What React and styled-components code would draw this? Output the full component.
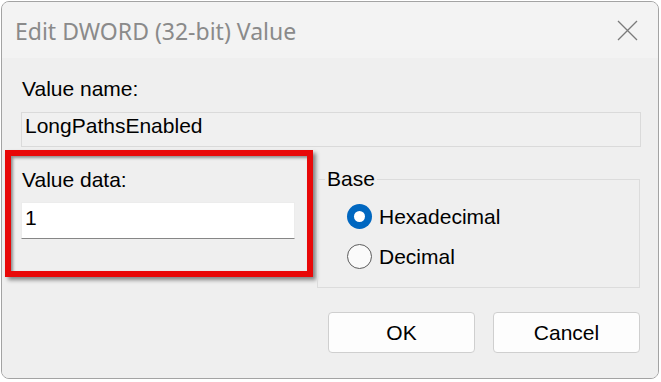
import React from 'react';
import styled, { createGlobalStyle } from 'styled-components';

const Global = createGlobalStyle`
  html, body {
    margin: 0;
    padding: 0;
    background: #ffffff;
  }
  body {
    width: 661px;
    height: 382px;
    overflow: hidden;
  }
`;

const Window = styled.div`
  margin: 1px 0 0 1px;
  width: 658px;
  height: 378px;
  box-sizing: border-box;
  border: 1px solid #a3a3a3;
  border-radius: 8px;
  overflow: hidden;
  display: flex;
  flex-direction: column;
  background: #f0f0f0;
  font-family: "Liberation Sans", Arial, sans-serif;
  font-size: 21px;
  line-height: 24px;
  color: #000;
`;

const TitleBar = styled.div`
  height: 56px;
  flex: none;
  background: #f3f3f3;
  display: flex;
  align-items: center;
  justify-content: space-between;
  padding: 0 20px 0 13px;
`;

const Title = styled.div`
  font-family: "Noto Sans", "Open Sans", sans-serif;
  font-size: 23px;
  line-height: 28px;
  color: #8a8a8a;
  margin-top: 1px;
`;

const CloseBtn = styled.div`
  width: 22px;
  height: 22px;
  display: flex;
  align-items: center;
  justify-content: center;
`;

const Body = styled.div`
  flex: 1;
  display: flex;
  flex-direction: column;
  background: #efefef;
`;

const Label = styled.div`
  padding-left: ${p => p.$indent || 0}px;
  margin-top: ${p => p.$top || 0}px;
`;

const NameField = styled.div`
  margin: 11px 17px 0 19px;
  height: 35px;
  box-sizing: border-box;
  border: 1px solid #dadada;
  background: #f0f0f0;
  padding: 1px 3px 0;
`;

const Row = styled.div`
  display: flex;
  align-items: flex-start;
  margin: 3px 0 0 3px;
`;

const Highlight = styled.div`
  width: 308px;
  height: 127px;
  box-sizing: border-box;
  border: 6px solid #e80808;
  padding: 12px 0 0 10px;
  box-shadow: 3px 3px 4px rgba(0, 0, 0, 0.45), inset 2px 2px 3px rgba(0, 0, 0, 0.4);
`;

const DataInput = styled.div`
  margin-top: 10px;
  width: 274px;
  height: 37px;
  box-sizing: border-box;
  background: #fff;
  border: 1px solid #ececec;
  border-bottom: 1px solid #868686;
  padding: 3px 3px 0;
`;

const Group = styled.fieldset`
  margin: 17px 0 0 4px;
  width: 323px;
  height: 121px;
  box-sizing: border-box;
  border: 1px solid #dcdcdc;
  padding: 13px 0 0 7px;
  min-width: 0;
`;

const Legend = styled.legend`
  padding: 0 2px;
`;

const RadioRow = styled.div`
  display: flex;
  align-items: center;
  gap: 7px;
  margin: ${p => (p.$first ? 0 : 15)}px 0 0 22px;
`;

const RadioDot = styled.span`
  width: 25px;
  height: 25px;
  box-sizing: border-box;
  border-radius: 50%;
  flex: none;
  display: flex;
  align-items: center;
  justify-content: center;
  background: ${p => (p.$checked ? '#0067c0' : '#fafafa')};
  border: ${p => (p.$checked ? 'none' : '1.5px solid #5c5c5c')};

  &::after {
    content: '';
    display: ${p => (p.$checked ? 'block' : 'none')};
    width: 11px;
    height: 11px;
    border-radius: 50%;
    background: #fff;
  }
`;

const Buttons = styled.div`
  display: flex;
  justify-content: flex-end;
  gap: 18px;
  margin-top: 24px;
  padding-right: 18px;
`;

const Button = styled.div`
  width: 147px;
  height: 41px;
  box-sizing: border-box;
  border: 1px solid #cfcfcf;
  border-radius: 4px;
  background: #fdfdfd;
  display: flex;
  align-items: center;
  justify-content: center;
`;

const Radio = ({ checked, first, children }) => (
  <RadioRow $first={first}>
    <RadioDot $checked={checked} />
    <span>{children}</span>
  </RadioRow>
);

export default function App() {
  return (
    <>
      <Global />
      <Window>
        <TitleBar>
          <Title>Edit DWORD (32-bit) Value</Title>
          <CloseBtn>
            <svg width="21" height="21" viewBox="0 0 21 21">
              <path d="M1 1 L20 20 M20 1 L1 20" stroke="#7a7a7a" strokeWidth="1.3" fill="none" />
            </svg>
          </CloseBtn>
        </TitleBar>
        <Body>
          <Label $indent={20} $top={19}>Value name:</Label>
          <NameField>LongPathsEnabled</NameField>
          <Row>
            <Highlight>
              <Label $indent={1}>Value data:</Label>
              <DataInput>1</DataInput>
            </Highlight>
            <Group>
              <Legend>Base</Legend>
              <Radio checked first>Hexadecimal</Radio>
              <Radio>Decimal</Radio>
            </Group>
          </Row>
          <Buttons>
            <Button>OK</Button>
            <Button>Cancel</Button>
          </Buttons>
        </Body>
      </Window>
    </>
  );
}
